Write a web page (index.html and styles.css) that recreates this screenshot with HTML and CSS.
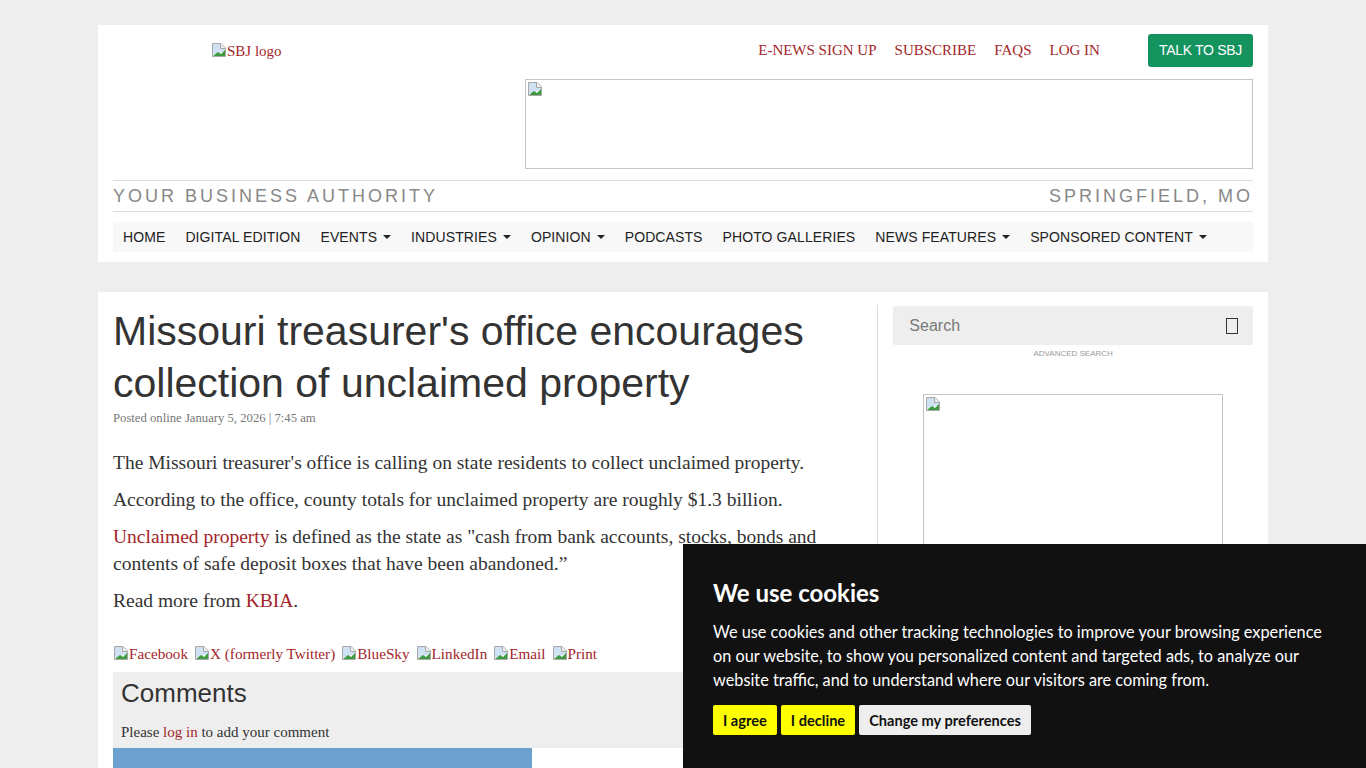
FILE: index.html
```html
<!DOCTYPE html>
<html lang="en">
<head>
    <meta charset="UTF-8">
    <meta name="viewport" content="width=device-width, initial-scale=1.0">
    <title>Missouri treasurer's office encourages collection of unclaimed property - SBJ</title>
    <link rel="stylesheet" href="styles.css">
</head>
<body>
<svg class="defs" width="0" height="0">
    <symbol id="broken" viewBox="0 0 16 16">
        <path d="M1.5 1.5h8.5l4.5 4.5v8.5h-13z" fill="#fff" stroke="#a8a8a8"/>
        <path d="M2 2h7.5v4.5h4.5v2.5l-12 4z" fill="#cfe1f3"/>
        <path d="M2 14l5-4 3 2 4-4v6z" fill="#3f9b3f"/>
        <path d="M9.5 2v4.5h4.5" fill="#eee" stroke="#a8a8a8"/>
    </symbol>
</svg>

<header class="site-header">
    <div class="header-top">
        <div class="logo-col">
            <a href="#" class="logo"><svg class="bi"><use href="#broken"/></svg>SBJ logo</a>
        </div>
        <div class="right-col">
            <div class="top-links">
                <a href="#">E-NEWS SIGN UP</a>
                <a href="#">SUBSCRIBE</a>
                <a href="#">FAQS</a>
                <a href="#">LOG IN</a>
                <a href="#" class="talk-btn">TALK TO SBJ</a>
            </div>
            <div class="leader-ad"><svg class="bi"><use href="#broken"/></svg></div>
        </div>
    </div>
    <div class="tagline">
        <span>YOUR BUSINESS AUTHORITY</span>
        <span>SPRINGFIELD, MO</span>
    </div>
    <nav class="main-nav">
        <a href="#">HOME</a>
        <a href="#">DIGITAL EDITION</a>
        <a href="#" class="drop">EVENTS</a>
        <a href="#" class="drop">INDUSTRIES</a>
        <a href="#" class="drop">OPINION</a>
        <a href="#">PODCASTS</a>
        <a href="#">PHOTO GALLERIES</a>
        <a href="#" class="drop">NEWS FEATURES</a>
        <a href="#" class="drop">SPONSORED CONTENT</a>
    </nav>
</header>

<main class="page">
    <article class="story">
        <h1>Missouri treasurer's office encourages collection of unclaimed property</h1>
        <p class="posted">Posted online January 5, 2026 | 7:45 am</p>

        <div class="story-body">
            <p>The Missouri treasurer's office is calling on state residents to collect unclaimed property.</p>
            <p>According to the office, county totals for unclaimed property are roughly $1.3 billion.</p>
            <p><a href="#">Unclaimed property</a> is defined as the state as "cash from bank accounts, stocks, bonds and contents of safe deposit boxes that have been abandoned.”</p>
            <p>Read more from <a href="#">KBIA</a>.</p>
        </div>

        <div class="share">
            <a href="#"><svg class="bi"><use href="#broken"/></svg>Facebook</a>
            <a href="#"><svg class="bi"><use href="#broken"/></svg>X (formerly Twitter)</a>
            <a href="#"><svg class="bi"><use href="#broken"/></svg>BlueSky</a>
            <a href="#"><svg class="bi"><use href="#broken"/></svg>LinkedIn</a>
            <a href="#"><svg class="bi"><use href="#broken"/></svg>Email</a>
            <a href="#"><svg class="bi"><use href="#broken"/></svg>Print</a>
        </div>

        <section class="comments">
            <h2>Comments</h2>
            <p>Please <a href="#">log in</a> to add your comment</p>
        </section>
        <div class="blue-box"></div>
    </article>

    <aside class="sidebar">
        <form class="search">
            <input type="text" placeholder="Search">
            <span class="search-icon"></span>
        </form>
        <a href="#" class="adv-search">ADVANCED SEARCH</a>
        <div class="side-ad"><svg class="bi"><use href="#broken"/></svg></div>
    </aside>
</main>

<div class="cookie-banner">
    <h3>We use cookies</h3>
    <p>We use cookies and other tracking technologies to improve your browsing experience on our website, to show you personalized content and targeted ads, to analyze our website traffic, and to understand where our visitors are coming from.</p>
    <div class="cookie-buttons">
        <button class="yes">I agree</button>
        <button class="yes">I decline</button>
        <button class="prefs">Change my preferences</button>
    </div>
</div>
</body>
</html>
```

FILE: styles.css
```css
body {
    margin: 0;
    padding: 0;
    background-color: #eee;
    font-family: "Liberation Serif", "Times New Roman", serif;
    color: #333;
}

a {
    color: #a3262a;
    text-decoration: none;
}

.defs {
    position: absolute;
}

.bi {
    width: 16px;
    height: 16px;
    vertical-align: -2px;
}

/* header */

.site-header {
    width: 1140px;
    margin: 25px auto 0;
    padding: 0 15px 10px;
    background: #fff;
}

.header-top {
    display: flex;
    height: 155px;
}

.logo-col {
    width: 412px;
    padding: 17px 0 0 98px;
    box-sizing: border-box;
}

.logo {
    font-size: 15px;
}

.right-col {
    flex: 1;
    padding-top: 9px;
}

.top-links {
    display: flex;
    align-items: center;
    justify-content: flex-end;
    height: 33px;
}

.top-links a {
    margin-left: 18px;
    font-size: 15px;
}

.top-links .talk-btn {
    margin-left: 48px;
    background: #14935f;
    color: #fff;
    font-family: "Liberation Sans", Arial, sans-serif;
    font-size: 14px;
    letter-spacing: -0.3px;
    padding: 0 11px;
    height: 33px;
    line-height: 33px;
    border-radius: 3px;
}

.leader-ad {
    margin-top: 12px;
    height: 86px;
    border: 1px solid #c4c4c4;
    padding: 1px;
}

.tagline {
    display: flex;
    justify-content: space-between;
    border-top: 1px solid #ddd;
    border-bottom: 1px solid #ddd;
    height: 30px;
    line-height: 30px;
    font-family: "Liberation Sans", Arial, sans-serif;
    font-size: 18px;
    letter-spacing: 3px;
    color: #888;
}

.main-nav {
    display: flex;
    margin-top: 10px;
    height: 30px;
    background: #f8f8f8;
    font-family: "Liberation Sans", Arial, sans-serif;
    font-size: 14px;
    letter-spacing: 0.1px;
}

.main-nav a {
    color: #222;
    line-height: 30px;
    padding: 0 10px;
}

.main-nav .drop::after {
    content: "";
    display: inline-block;
    margin-left: 6px;
    vertical-align: 3px;
    border-top: 4px solid #222;
    border-left: 4px solid transparent;
    border-right: 4px solid transparent;
}

/* article */

.page {
    display: flex;
    width: 1140px;
    margin: 30px auto 0;
    padding: 13px 15px 0;
    background: #fff;
}

.story {
    width: 750px;
    padding-right: 15px;
    border-right: 1px solid #ddd;
}

.story h1 {
    margin: 0;
    font-family: "Liberation Sans", Arial, sans-serif;
    font-size: 41px;
    font-weight: normal;
    line-height: 52px;
    color: #333;
}

.posted {
    margin: 2px 0 0;
    font-size: 12.7px;
    color: #777;
}

.story-body {
    margin-top: 23px;
}

.story-body p {
    margin: 0 0 10px;
    font-size: 19.5px;
    line-height: 27px;
}

.share {
    display: flex;
    gap: 6px;
    margin-top: 30px;
    font-size: 15.2px;
    line-height: 20px;
}

.comments {
    margin-top: 8px;
    padding: 4px 8px 6px;
    background: #eee;
}

.comments h2 {
    margin: 0;
    font-family: "Liberation Sans", Arial, sans-serif;
    font-size: 26px;
    font-weight: normal;
    line-height: 34px;
}

.comments p {
    margin: 12px 0 0;
    font-size: 15px;
    line-height: 20px;
}

.blue-box {
    width: 419px;
    height: 60px;
    background: #6da2cf;
}

/* sidebar */

.sidebar {
    width: 360px;
    padding-left: 15px;
}

.search {
    display: flex;
    align-items: center;
    height: 39px;
    margin-top: 1px;
    background: #eee;
    border-radius: 2px;
    padding: 0 15px 0 16px;
}

.search input {
    flex: 1;
    border: none;
    background: transparent;
    font-family: "Liberation Sans", Arial, sans-serif;
    font-size: 16px;
    color: #555;
    padding: 0;
    outline: none;
}

.search input::placeholder {
    color: #777;
}

.search-icon {
    width: 10px;
    height: 14px;
    border: 1px solid #333;
}

.adv-search {
    display: block;
    margin-top: 4px;
    text-align: center;
    font-family: "Liberation Sans", Arial, sans-serif;
    font-size: 8px;
    color: #999;
}

.side-ad {
    width: 296px;
    height: 248px;
    margin: 36px auto 0;
    border: 1px solid #c4c4c4;
    padding: 1px;
}

/* cookie banner */

.cookie-banner {
    position: fixed;
    right: 0;
    bottom: 0;
    width: 623px;
    height: 193px;
    padding: 31px 30px 0;
    background: #111;
    color: #fff;
    font-family: Lato, "Open Sans", sans-serif;
}

.cookie-banner h3 {
    margin: 0;
    font-size: 24px;
    font-weight: bold;
    line-height: 36px;
}

.cookie-banner p {
    margin: 9px 0 0;
    font-size: 16.3px;
    line-height: 24px;
}

.cookie-buttons {
    display: flex;
    gap: 4px;
    margin-top: 13px;
}

.cookie-buttons button {
    height: 30px;
    padding: 0 10px;
    border: none;
    border-radius: 2px;
    font-family: Lato, "Open Sans", sans-serif;
    font-size: 14.6px;
    font-weight: bold;
    color: #111;
    cursor: pointer;
}

.cookie-buttons .yes {
    background: #ffff00;
}

.cookie-buttons .prefs {
    background: #eee;
}
```
